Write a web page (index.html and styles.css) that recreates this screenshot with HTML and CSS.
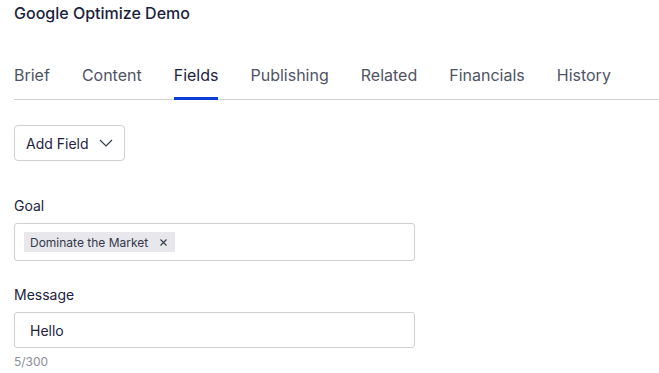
FILE: index.html
```html
<!DOCTYPE html>
<html lang="en">
<head>
  <meta charset="UTF-8">
  <title>Google Optimize Demo</title>
  <link rel="stylesheet" href="styles.css">
</head>
<body>
  <div class="page">
    <h1 class="title">Google Optimize Demo</h1>

    <div class="tabs">
      <div class="tab">Brief</div>
      <div class="tab">Content</div>
      <div class="tab active">Fields</div>
      <div class="tab">Publishing</div>
      <div class="tab">Related</div>
      <div class="tab">Financials</div>
      <div class="tab">History</div>
    </div>

    <button class="add-btn">
      Add Field
      <svg width="14" height="8" viewBox="0 0 14 8"><path d="M1 1l6 6 6-6" fill="none" stroke="#333a4d" stroke-width="1.2"/></svg>
    </button>

    <div class="field">
      <div class="label">Goal</div>
      <div class="input tags">
        <span class="chip">Dominate the Market
          <svg class="x" width="7" height="7" viewBox="0 0 7 7"><path d="M0.5 0.5l6 6M6.5 0.5l-6 6" stroke="#33384a" stroke-width="1.1"/></svg>
        </span>
      </div>
    </div>

    <div class="field msg">
      <div class="label">Message</div>
      <div class="input text">Hello</div>
      <div class="count">5/300</div>
    </div>
  </div>
</body>
</html>
```

FILE: styles.css
```css
body {
  margin: 0;
  font-family: Inter, "Noto Sans", sans-serif;
  background: #fff;
  color: #1e2240;
}
.page {
  padding-left: 14px;
}
.title {
  margin: 0;
  padding-top: 4px;
  font-size: 16px;
  line-height: 19px;
  font-weight: 500;
  color: #1c1f3d;
}
.tabs {
  display: flex;
  gap: 32px;
  margin-top: 42px;
  border-bottom: 1px solid #d0d0d4;
}
.tab {
  font-size: 16px;
  line-height: 20px;
  color: #4f5464;
  padding-bottom: 12px;
  border-bottom: 3px solid transparent;
  margin-bottom: -1px;
}
.tab.active {
  color: #1c1f3d;
  border-bottom-color: #0b3ed8;
}
.add-btn {
  display: inline-flex;
  align-items: center;
  gap: 10px;
  height: 36px;
  margin-top: 25px;
  padding: 0 11px 0 11px;
  border: 1px solid #cfcfd4;
  border-radius: 4px;
  background: #fff;
  font-family: inherit;
  font-size: 14px;
  color: #1e2240;
}
.field {
  margin-top: 35px;
  width: 401px;
}
.field.msg {
  margin-top: 24px;
}
.label {
  font-size: 14px;
  line-height: 20px;
  color: #1e2240;
  margin-bottom: 7px;
}
.input {
  box-sizing: border-box;
  border: 1px solid #cfcfd4;
  border-radius: 3px;
  display: flex;
  align-items: center;
}
.tags {
  height: 38px;
  padding-left: 9px;
}
.chip {
  display: inline-flex;
  align-items: center;
  height: 20px;
  background: #e7e7ec;
  font-size: 12px;
  color: #33384a;
  padding: 0 8px 0 6px;
}
.chip .x {
  margin-left: 12px;
}
.text {
  height: 36px;
  padding-left: 15px;
  font-size: 14px;
  color: #1e2240;
}
.count {
  margin-top: 6px;
  font-size: 12px;
  line-height: 16px;
  color: #8a8d96;
}
```
